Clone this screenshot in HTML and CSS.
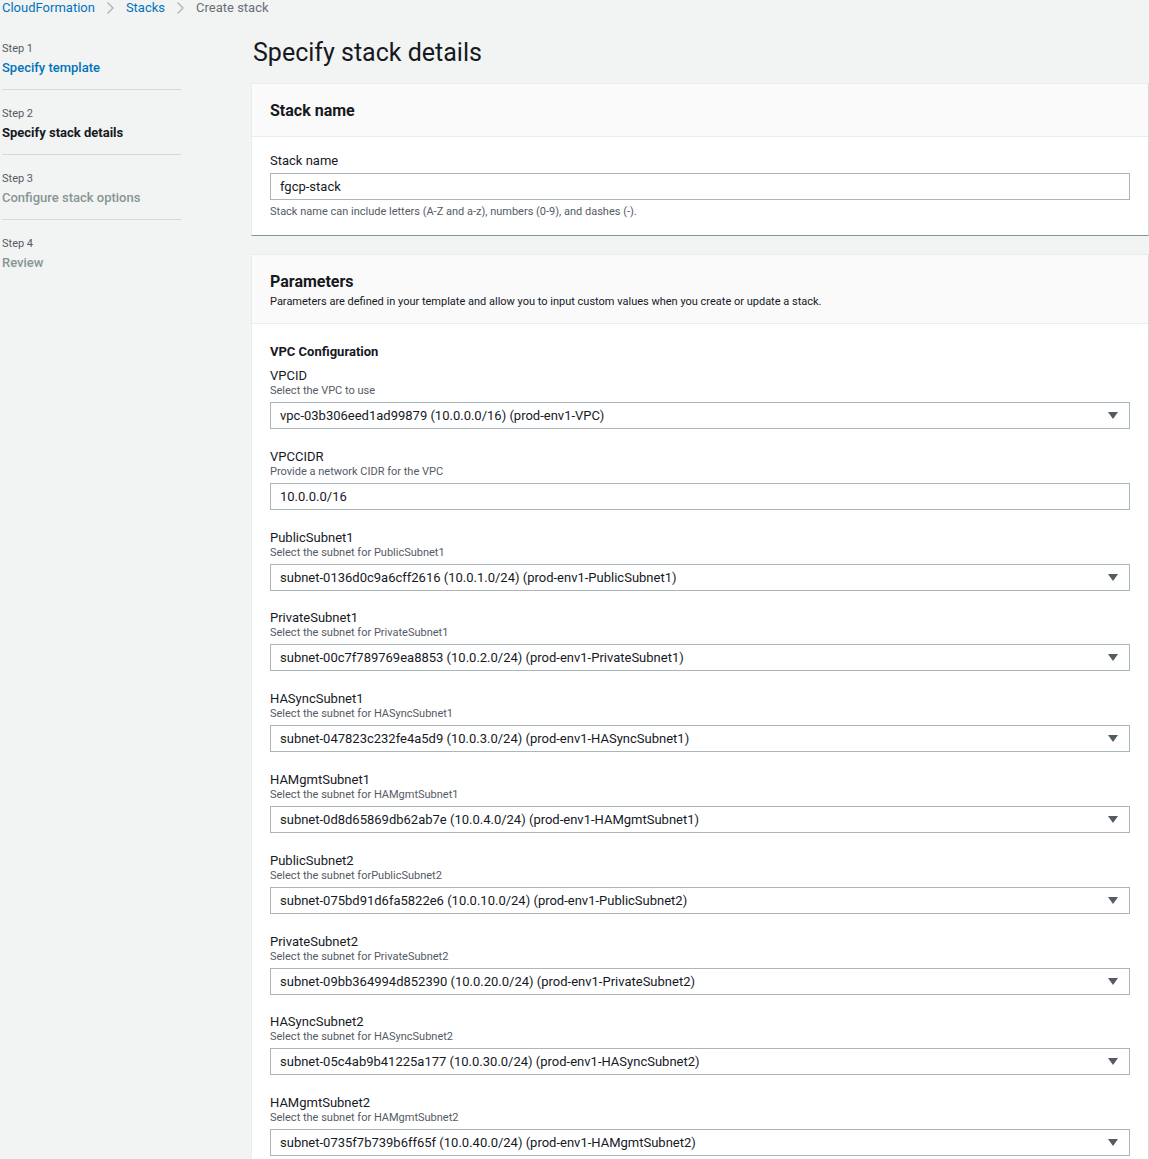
FILE: index.html
```html
<!DOCTYPE html>
<html lang="en">
<head>
<meta charset="utf-8">
<title>Create stack</title>
<link rel="stylesheet" href="styles.css">
</head>
<body>
<nav class="crumbs">
  <a class="crumb-link">CloudFormation</a>
  <span class="chev"><svg width="9" height="14" viewBox="0 0 9 14"><path d="M1.5 1.5 L7 7 L1.5 12.5" fill="none" stroke="#aab7b8" stroke-width="1.4"/></svg></span>
  <a class="crumb-link">Stacks</a>
  <span class="chev"><svg width="9" height="14" viewBox="0 0 9 14"><path d="M1.5 1.5 L7 7 L1.5 12.5" fill="none" stroke="#aab7b8" stroke-width="1.4"/></svg></span>
  <span class="crumb-current">Create stack</span>
</nav>
<div class="layout">
  <aside class="steps">
    <div class="step">
      <div class="step-num">Step 1</div>
      <div class="step-title link">Specify template</div>
    </div>
    <div class="step">
      <div class="step-num">Step 2</div>
      <div class="step-title active">Specify stack details</div>
    </div>
    <div class="step">
      <div class="step-num">Step 3</div>
      <div class="step-title disabled">Configure stack options</div>
    </div>
    <div class="step last">
      <div class="step-num">Step 4</div>
      <div class="step-title disabled">Review</div>
    </div>
  </aside>
  <main class="main">
    <h1 class="page-title">Specify stack details</h1>
    <section class="card">
      <header class="card-head">
        <h2 class="card-title">Stack name</h2>
      </header>
      <div class="card-body first-body">
        <div class="field-label">Stack name</div>
        <div class="input">fgcp-stack</div>
        <div class="hint">Stack name can include letters (A-Z and a-z), numbers (0-9), and dashes (-).</div>
      </div>
    </section>
    <section class="card">
      <header class="card-head params-head">
        <h2 class="card-title">Parameters</h2>
        <p class="card-desc">Parameters are defined in your template and allow you to input custom values when you create or update a stack.</p>
      </header>
      <div class="card-body">
        <h3 class="group-title">VPC Configuration</h3>
        <div class="field">
          <div class="field-label">VPCID</div>
          <div class="field-desc">Select the VPC to use</div>
          <div class="input select">vpc-03b306eed1ad99879 (10.0.0.0/16) (prod-env1-VPC)<span class="caret"></span></div>
        </div>
        <div class="field">
          <div class="field-label">VPCCIDR</div>
          <div class="field-desc">Provide a network CIDR for the VPC</div>
          <div class="input">10.0.0.0/16</div>
        </div>
        <div class="field">
          <div class="field-label">PublicSubnet1</div>
          <div class="field-desc">Select the subnet for PublicSubnet1</div>
          <div class="input select">subnet-0136d0c9a6cff2616 (10.0.1.0/24) (prod-env1-PublicSubnet1)<span class="caret"></span></div>
        </div>
        <div class="field">
          <div class="field-label">PrivateSubnet1</div>
          <div class="field-desc">Select the subnet for PrivateSubnet1</div>
          <div class="input select">subnet-00c7f789769ea8853 (10.0.2.0/24) (prod-env1-PrivateSubnet1)<span class="caret"></span></div>
        </div>
        <div class="field">
          <div class="field-label">HASyncSubnet1</div>
          <div class="field-desc">Select the subnet for HASyncSubnet1</div>
          <div class="input select">subnet-047823c232fe4a5d9 (10.0.3.0/24) (prod-env1-HASyncSubnet1)<span class="caret"></span></div>
        </div>
        <div class="field">
          <div class="field-label">HAMgmtSubnet1</div>
          <div class="field-desc">Select the subnet for HAMgmtSubnet1</div>
          <div class="input select">subnet-0d8d65869db62ab7e (10.0.4.0/24) (prod-env1-HAMgmtSubnet1)<span class="caret"></span></div>
        </div>
        <div class="field">
          <div class="field-label">PublicSubnet2</div>
          <div class="field-desc">Select the subnet forPublicSubnet2</div>
          <div class="input select">subnet-075bd91d6fa5822e6 (10.0.10.0/24) (prod-env1-PublicSubnet2)<span class="caret"></span></div>
        </div>
        <div class="field">
          <div class="field-label">PrivateSubnet2</div>
          <div class="field-desc">Select the subnet for PrivateSubnet2</div>
          <div class="input select">subnet-09bb364994d852390 (10.0.20.0/24) (prod-env1-PrivateSubnet2)<span class="caret"></span></div>
        </div>
        <div class="field">
          <div class="field-label">HASyncSubnet2</div>
          <div class="field-desc">Select the subnet for HASyncSubnet2</div>
          <div class="input select">subnet-05c4ab9b41225a177 (10.0.30.0/24) (prod-env1-HASyncSubnet2)<span class="caret"></span></div>
        </div>
        <div class="field">
          <div class="field-label">HAMgmtSubnet2</div>
          <div class="field-desc">Select the subnet for HAMgmtSubnet2</div>
          <div class="input select">subnet-0735f7b739b6ff65f (10.0.40.0/24) (prod-env1-HAMgmtSubnet2)<span class="caret"></span></div>
        </div>
      </div>
    </section>
  </main>
</div>
</body>
</html>
```

FILE: styles.css
```css
* { box-sizing: border-box; }
html, body {
  margin: 0;
  padding: 0;
  background: #f2f3f3;
  font-family: Roboto, "Liberation Sans", sans-serif;
  color: #16191f;
  font-size: 13px;
}
body { overflow: hidden; height: 1159px; }

.crumbs {
  display: flex;
  align-items: center;
  height: 15px;
  padding-left: 2px;
  font-size: 13px;
  line-height: 15px;
}
.crumb-link { color: #0073bb; }
.chev { display: inline-flex; margin: 0 11px 0 11px; }
.crumb-current { color: #687078; }

.layout {
  display: grid;
  grid-template-columns: 251px 1fr;
}

.steps {
  padding: 26px 0 0 2px;
}
.step {
  width: 179px;
  padding: 0 0 11px;
  margin-bottom: 16px;
  border-bottom: 1px solid #d5dbdb;
}
.step.last { border-bottom: none; }
.step-num {
  font-size: 11px;
  line-height: 16px;
  color: #545b64;
}
.step-title {
  font-size: 13px;
  line-height: 20px;
  margin-top: 1px;
}
.step-title.link { color: #0073bb; font-weight: 500; }
.step-title.active { color: #16191f; font-weight: 700; }
.step-title.disabled { color: #879596; font-weight: 500; }

.page-title {
  margin: 21px 0 0 2px;
  font-size: 25px;
  line-height: 33px;
  font-weight: 400;
  color: #16191f;
}
.card {
  background: #fff;
  border-left: 1px solid #eaeded;
  border-top: 1px solid #eaeded;
  border-right: 1px solid #d5dbdb;
  border-bottom: 1px solid #879596;
  margin-top: 14px;
}
.card + .card { margin-top: 18px; }
.card-head {
  background: #fafafa;
  border-bottom: 1px solid #eaeded;
  padding: 15px 18px 0;
  height: 53px;
}
.params-head { height: 69px; padding-top: 15px; }
.card-title {
  margin: 0;
  font-size: 16px;
  line-height: 24px;
  font-weight: 700;
}
.card-desc {
  margin: 0;
  font-size: 11px;
  line-height: 16px;
  color: #16191f;
}
.card-body {
  padding: 16px 18px 20px 18px;
}
.first-body { padding-top: 15px; padding-bottom: 15px; }

.field-label {
  font-size: 13px;
  line-height: 17px;
  color: #16191f;
}
.first-body .field-label { margin-bottom: 4px; }
.field-desc {
  font-size: 11px;
  line-height: 14px;
  color: #545b64;
  margin-bottom: 4px;
}
.input {
  position: relative;
  height: 27px;
  border: 1px solid #aab7b8;
  background: #fff;
  padding: 0 9px;
  font-size: 13px;
  line-height: 25px;
  color: #16191f;
}
.hint {
  font-size: 11px;
  line-height: 16px;
  color: #545b64;
  margin-top: 4px;
}
.group-title {
  margin: 3px 0 6px;
  font-size: 13px;
  line-height: 18px;
  font-weight: 700;
}
.field { margin-bottom: 18.8px; }
.caret {
  position: absolute;
  right: 11px;
  top: 9px;
  width: 0;
  height: 0;
  border-left: 5px solid transparent;
  border-right: 5px solid transparent;
  border-top: 7px solid #545b64;
}
```
